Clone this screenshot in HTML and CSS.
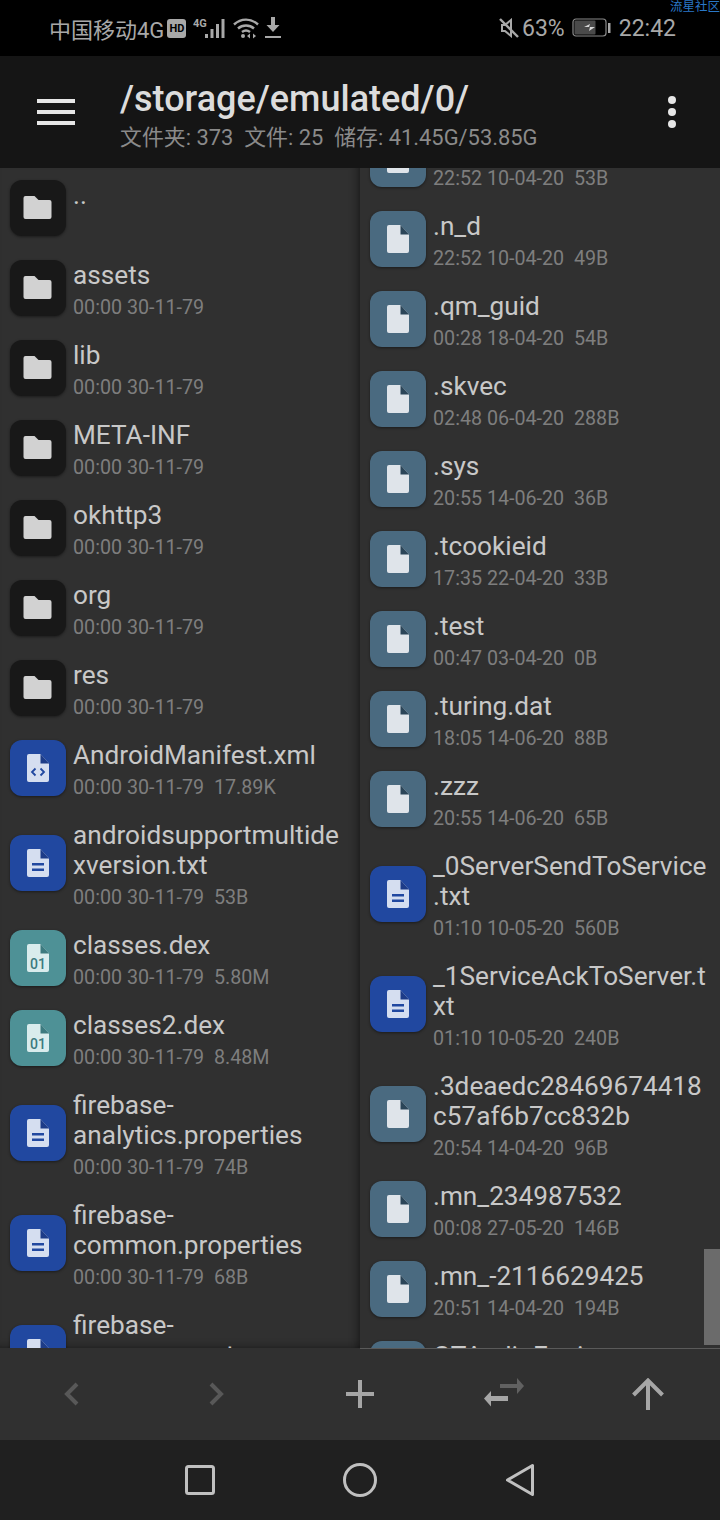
FILE: index.html
```html
<!DOCTYPE html>
<html lang="en">
<head>
    <meta charset="UTF-8">
    <meta name="viewport" content="width=device-width, initial-scale=1.0">
    <title>File Explorer</title>
    <link rel="stylesheet" href="styles.css">
</head>
<body>
    <svg class="sprite" width="0" height="0">
        <symbol id="folder" viewBox="0 0 56 56">
            <path d="M15.500 16h9l4 4h11a2 2 0 0 1 2 2v15a2 2 0 0 1-2 2h-24a2 2 0 0 1-2-2v-19a2 2 0 0 1 2-2z" fill="#d2d2d2"/>
        </symbol>
        <symbol id="doc" viewBox="0 0 56 56">
            <path d="M19 14h11.500l8.500 9.500v16.500a2 2 0 0 1-2 2h-18a2 2 0 0 1-2-2v-24a2 2 0 0 1 2-2z" fill="#dfe4ea"/>
            <path d="M30.500 14l8.500 9.500h-8.500z" fill="#2b4558"/>
        </symbol>
        <symbol id="txt" viewBox="0 0 56 56">
            <path d="M19 14h11.500l8.500 9.500v16.500a2 2 0 0 1-2 2h-18a2 2 0 0 1-2-2v-24a2 2 0 0 1 2-2z" fill="#d5def0"/>
            <path d="M30.500 14l8.500 9.500h-8.500z" fill="#1d3c88"/>
            <path d="M22 28h12v2.500h-12zM22 33.500h12v2.500h-12z" fill="#2148a0"/>
        </symbol>
        <symbol id="xml" viewBox="0 0 56 56">
            <path d="M19 14h11.500l8.500 9.500v16.500a2 2 0 0 1-2 2h-18a2 2 0 0 1-2-2v-24a2 2 0 0 1 2-2z" fill="#d5def0"/>
            <path d="M30.500 14l8.500 9.500h-8.500z" fill="#1d3c88"/>
            <path d="M25.500 28.500l-3.500 3.500 3.500 3.500M30.500 28.500l3.500 3.500-3.500 3.500" fill="none" stroke="#2148a0" stroke-width="1.800"/>
        </symbol>
        <symbol id="dex" viewBox="0 0 56 56">
            <path d="M19 14h11.500l8.500 9.500v16.500a2 2 0 0 1-2 2h-18a2 2 0 0 1-2-2v-24a2 2 0 0 1 2-2z" fill="#d9eced"/>
            <path d="M30.500 14l8.500 9.500h-8.500z" fill="#3c7a7f"/>
        </symbol>
    </svg>

    <div class="status-bar">
        <span class="watermark">流星社区</span>
        <div class="status-left">
            <span>中国移动4G</span>
            <span class="hd">HD</span>
            <svg class="signal" width="34" height="24" viewBox="0 0 34 24">
                <path d="M12 18h3v4h-3zM17.500 13h3v9h-3zM23 8h3v14h-3zM28.500 3h3v19h-3z" fill="#a8a8a8"/>
                <text x="0" y="11" class="signal-text">4G</text>
            </svg>
            <svg class="wifi" width="26" height="22" viewBox="0 0 26 22">
                <path d="M1 7.500c7-6.500 17-6.500 24 0M5 11.500c4.500-4 11.500-4 16 0M9 15c2.500-2 5.500-2 8 0" fill="none" stroke="#a8a8a8" stroke-width="2.400"/>
                <circle cx="10" cy="19" r="2" fill="#a8a8a8"/>
                <path d="M17 16.500l-3 2.500 3 2.500zM20 16.500l3 2.500-3 2.500z" fill="#a8a8a8"/>
            </svg>
            <svg class="download" width="16" height="22" viewBox="0 0 16 22">
                <path d="M6 0h4v8h4.500l-6.500 7-6.500-7h4.500zM0 19h16v2h-16z" fill="#a8a8a8"/>
            </svg>
        </div>
        <div class="status-right">
            <svg width="20" height="20" viewBox="0 0 20 20">
                <path d="M3 7h3l6-5v16l-6-5h-3z" fill="none" stroke="#a8a8a8" stroke-width="2"/>
                <path d="M1 1l18 18" stroke="#a8a8a8" stroke-width="2.400"/>
            </svg>
            <span class="percent">63%</span>
            <svg class="battery" width="39" height="20" viewBox="0 0 39 20">
                <rect x="1" y="1" width="33" height="17" rx="3" fill="none" stroke="#8a8a8a" stroke-width="1.200"/>
                <rect x="2.500" y="2.500" width="21" height="14" rx="1" fill="#4a4a4a"/>
                <path d="M12 9l6-3-1 3h6l-6 4 1-4z" fill="#d8d8d8"/>
                <rect x="36" y="5" width="2.500" height="10" fill="#a8a8a8"/>
            </svg>
            <span>22:42</span>
        </div>
    </div>

    <div class="app-bar">
        <div class="menu-btn">
            <svg width="38" height="26" viewBox="0 0 38 26">
                <path d="M0 0h38v4h-38zM0 11h38v4h-38zM0 22h38v4h-38z" fill="#e6e6e6"/>
            </svg>
        </div>
        <div class="path-info">
            <div class="path">/storage/emulated/0/</div>
            <div class="path-stats">文件夹: 373&nbsp; 文件: 25&nbsp; 储存: 41.45G/53.85G</div>
        </div>
        <div class="more-btn">
            <svg width="10" height="34" viewBox="0 0 10 34">
                <circle cx="5" cy="5" r="4" fill="#e6e6e6"/>
                <circle cx="5" cy="17" r="4" fill="#e6e6e6"/>
                <circle cx="5" cy="29" r="4" fill="#e6e6e6"/>
            </svg>
        </div>
    </div>

    <div class="panes">
        <div class="pane left-pane">
            <div class="file-row">
                <div class="file-icon dir"><svg><use href="#folder"/></svg></div>
                <div class="file-text"><div class="name">..</div></div>
            </div>
            <div class="file-row">
                <div class="file-icon dir"><svg><use href="#folder"/></svg></div>
                <div class="file-text"><div class="name">assets</div><div class="meta">00:00 30-11-79</div></div>
            </div>
            <div class="file-row">
                <div class="file-icon dir"><svg><use href="#folder"/></svg></div>
                <div class="file-text"><div class="name">lib</div><div class="meta">00:00 30-11-79</div></div>
            </div>
            <div class="file-row">
                <div class="file-icon dir"><svg><use href="#folder"/></svg></div>
                <div class="file-text"><div class="name">META-INF</div><div class="meta">00:00 30-11-79</div></div>
            </div>
            <div class="file-row">
                <div class="file-icon dir"><svg><use href="#folder"/></svg></div>
                <div class="file-text"><div class="name">okhttp3</div><div class="meta">00:00 30-11-79</div></div>
            </div>
            <div class="file-row">
                <div class="file-icon dir"><svg><use href="#folder"/></svg></div>
                <div class="file-text"><div class="name">org</div><div class="meta">00:00 30-11-79</div></div>
            </div>
            <div class="file-row">
                <div class="file-icon dir"><svg><use href="#folder"/></svg></div>
                <div class="file-text"><div class="name">res</div><div class="meta">00:00 30-11-79</div></div>
            </div>
            <div class="file-row">
                <div class="file-icon blue"><svg><use href="#xml"/></svg></div>
                <div class="file-text"><div class="name">AndroidManifest.xml</div><div class="meta">00:00 30-11-79&nbsp; 17.89K</div></div>
            </div>
            <div class="file-row">
                <div class="file-icon blue"><svg><use href="#txt"/></svg></div>
                <div class="file-text"><div class="name">androidsupportmultide<br>xversion.txt</div><div class="meta">00:00 30-11-79&nbsp; 53B</div></div>
            </div>
            <div class="file-row">
                <div class="file-icon teal"><svg><use href="#dex"/></svg><span class="dex-label">01</span></div>
                <div class="file-text"><div class="name">classes.dex</div><div class="meta">00:00 30-11-79&nbsp; 5.80M</div></div>
            </div>
            <div class="file-row">
                <div class="file-icon teal"><svg><use href="#dex"/></svg><span class="dex-label">01</span></div>
                <div class="file-text"><div class="name">classes2.dex</div><div class="meta">00:00 30-11-79&nbsp; 8.48M</div></div>
            </div>
            <div class="file-row">
                <div class="file-icon blue"><svg><use href="#txt"/></svg></div>
                <div class="file-text"><div class="name">firebase-<br>analytics.properties</div><div class="meta">00:00 30-11-79&nbsp; 74B</div></div>
            </div>
            <div class="file-row">
                <div class="file-icon blue"><svg><use href="#txt"/></svg></div>
                <div class="file-text"><div class="name">firebase-<br>common.properties</div><div class="meta">00:00 30-11-79&nbsp; 68B</div></div>
            </div>
            <div class="file-row">
                <div class="file-icon blue"><svg><use href="#txt"/></svg></div>
                <div class="file-text"><div class="name">firebase-<br>measurement</div><div class="meta">00:00 30-11-79&nbsp; 60B</div></div>
            </div>
        </div>

        <div class="pane right-pane">
            <div class="right-list">
                <div class="file-row">
                    <div class="file-icon slate"><svg><use href="#doc"/></svg></div>
                    <div class="file-text"><div class="name">.n_c</div><div class="meta">22:52 10-04-20&nbsp; 53B</div></div>
                </div>
                <div class="file-row">
                    <div class="file-icon slate"><svg><use href="#doc"/></svg></div>
                    <div class="file-text"><div class="name">.n_d</div><div class="meta">22:52 10-04-20&nbsp; 49B</div></div>
                </div>
                <div class="file-row">
                    <div class="file-icon slate"><svg><use href="#doc"/></svg></div>
                    <div class="file-text"><div class="name">.qm_guid</div><div class="meta">00:28 18-04-20&nbsp; 54B</div></div>
                </div>
                <div class="file-row">
                    <div class="file-icon slate"><svg><use href="#doc"/></svg></div>
                    <div class="file-text"><div class="name">.skvec</div><div class="meta">02:48 06-04-20&nbsp; 288B</div></div>
                </div>
                <div class="file-row">
                    <div class="file-icon slate"><svg><use href="#doc"/></svg></div>
                    <div class="file-text"><div class="name">.sys</div><div class="meta">20:55 14-06-20&nbsp; 36B</div></div>
                </div>
                <div class="file-row">
                    <div class="file-icon slate"><svg><use href="#doc"/></svg></div>
                    <div class="file-text"><div class="name">.tcookieid</div><div class="meta">17:35 22-04-20&nbsp; 33B</div></div>
                </div>
                <div class="file-row">
                    <div class="file-icon slate"><svg><use href="#doc"/></svg></div>
                    <div class="file-text"><div class="name">.test</div><div class="meta">00:47 03-04-20&nbsp; 0B</div></div>
                </div>
                <div class="file-row">
                    <div class="file-icon slate"><svg><use href="#doc"/></svg></div>
                    <div class="file-text"><div class="name">.turing.dat</div><div class="meta">18:05 14-06-20&nbsp; 88B</div></div>
                </div>
                <div class="file-row">
                    <div class="file-icon slate"><svg><use href="#doc"/></svg></div>
                    <div class="file-text"><div class="name">.zzz</div><div class="meta">20:55 14-06-20&nbsp; 65B</div></div>
                </div>
                <div class="file-row">
                    <div class="file-icon blue"><svg><use href="#txt"/></svg></div>
                    <div class="file-text"><div class="name">_0ServerSendToService<br>.txt</div><div class="meta">01:10 10-05-20&nbsp; 560B</div></div>
                </div>
                <div class="file-row">
                    <div class="file-icon blue"><svg><use href="#txt"/></svg></div>
                    <div class="file-text"><div class="name">_1ServiceAckToServer.t<br>xt</div><div class="meta">01:10 10-05-20&nbsp; 240B</div></div>
                </div>
                <div class="file-row">
                    <div class="file-icon slate"><svg><use href="#doc"/></svg></div>
                    <div class="file-text"><div class="name">.3deaedc28469674418<br>c57af6b7cc832b</div><div class="meta">20:54 14-04-20&nbsp; 96B</div></div>
                </div>
                <div class="file-row">
                    <div class="file-icon slate"><svg><use href="#doc"/></svg></div>
                    <div class="file-text"><div class="name">.mn_234987532</div><div class="meta">00:08 27-05-20&nbsp; 146B</div></div>
                </div>
                <div class="file-row">
                    <div class="file-icon slate"><svg><use href="#doc"/></svg></div>
                    <div class="file-text"><div class="name">.mn_-2116629425</div><div class="meta">20:51 14-04-20&nbsp; 194B</div></div>
                </div>
                <div class="file-row">
                    <div class="file-icon slate"><svg><use href="#doc"/></svg></div>
                    <div class="file-text"><div class="name">GTAudioEngine</div><div class="meta">20:51 14-04-20&nbsp; 20B</div></div>
                </div>
            </div>
            <div class="scroll-thumb"></div>
        </div>
    </div>

    <div class="tool-bar">
        <div class="tool">
            <svg width="16" height="24" viewBox="0 0 16 24"><path d="M13 2l-10 10 10 10" fill="none" stroke="#585858" stroke-width="4"/></svg>
        </div>
        <div class="tool">
            <svg width="16" height="24" viewBox="0 0 16 24"><path d="M3 2l10 10-10 10" fill="none" stroke="#585858" stroke-width="4"/></svg>
        </div>
        <div class="tool">
            <svg width="28" height="28" viewBox="0 0 28 28"><path d="M12 0h4v12h12v4h-12v12h-4v-12h-12v-4h12z" fill="#a6a6a6"/></svg>
        </div>
        <div class="tool">
            <svg width="40" height="32" viewBox="0 0 40 32">
                <path d="M16 6h17v-6l7 8-7 8v-6h-17z" fill="#616161"/>
                <path d="M24 18h-17v-5l-7 7.500 7 8v-5.500h17z" fill="#a6a6a6"/>
            </svg>
        </div>
        <div class="tool">
            <svg width="32" height="32" viewBox="0 0 32 32"><path d="M16 32v-29M1.500 17l14.500-14.500 14.500 14.500" fill="none" stroke="#a6a6a6" stroke-width="4"/></svg>
        </div>
    </div>

    <div class="nav-bar">
        <div class="nav-btn">
            <svg width="30" height="30" viewBox="0 0 30 30"><rect x="1.500" y="1.500" width="27" height="27" rx="2" fill="none" stroke="#c0c0c0" stroke-width="3"/></svg>
        </div>
        <div class="nav-btn">
            <svg width="34" height="34" viewBox="0 0 34 34"><circle cx="17" cy="17" r="15.500" fill="none" stroke="#c0c0c0" stroke-width="3"/></svg>
        </div>
        <div class="nav-btn">
            <svg width="30" height="34" viewBox="0 0 30 34"><path d="M27.500 2.500v29l-25-14.500z" fill="none" stroke="#c0c0c0" stroke-width="3" stroke-linejoin="round"/></svg>
        </div>
    </div>
</body>
</html>
```

FILE: styles.css
```css
html, body {
    height: 100%;
}

body {
    margin: 0;
    display: flex;
    flex-direction: column;
    overflow: hidden;
    background: #303030;
    font-family: Roboto, "Noto Sans CJK SC", sans-serif;
}

.sprite {
    position: absolute;
}

.status-bar {
    position: relative;
    flex: 0 0 56px;
    display: flex;
    align-items: center;
    justify-content: space-between;
    padding: 0 44px 0 49px;
    background: #000;
    color: #a8a8a8;
    font-size: 23px;
}

.watermark {
    position: absolute;
    top: 0;
    right: 0;
    font-size: 12.5px;
    line-height: 13px;
    color: #2a78c8;
}

.status-left,
.status-right {
    display: flex;
    align-items: center;
}

.status-left {
    font-size: 22px;
}

.hd {
    width: 19px;
    height: 19px;
    margin-left: 3px;
    border-radius: 3px;
    background: #a8a8a8;
    color: #000;
    font-size: 11px;
    font-weight: 700;
    line-height: 19px;
    text-align: center;
}

.signal {
    margin-left: 7px;
}

.signal-text {
    font-size: 11px;
    font-weight: 700;
    fill: #a8a8a8;
}

.wifi {
    margin-left: 6px;
}

.download {
    margin-left: 6px;
}

.percent {
    margin-left: 3px;
}

.battery {
    margin: 0 8px 0 7px;
}

.app-bar {
    flex: 0 0 112px;
    display: flex;
    align-items: center;
    background: #151515;
}

.menu-btn {
    flex: 0 0 112px;
    display: flex;
    justify-content: center;
}

.more-btn {
    flex: 0 0 96px;
    display: flex;
    justify-content: center;
}

.path-info {
    flex: 1;
    margin-left: 8px;
    padding-top: 8px;
}

.path {
    color: #dcdcdc;
    font-size: 36px;
    font-weight: 500;
    line-height: 44px;
}

.path-stats {
    color: #8a8a8a;
    font-size: 21.9px;
    line-height: 34px;
}

.panes {
    flex: 1;
    display: flex;
    min-height: 0;
}

.pane {
    position: relative;
    overflow: hidden;
    background: #303030;
}

.left-pane {
    flex: 0 0 360px;
    box-shadow: inset -10px 0 8px -8px rgba(0, 0, 0, 0.45), inset 0 -8px 8px -8px rgba(0, 0, 0, 0.45);
}

.right-pane {
    flex: 1;
}

.right-list {
    margin-top: -49px;
}

.file-row {
    display: flex;
    align-items: center;
    padding: 12px 10px 5px;
    min-height: 63px;
}

.file-icon {
    position: relative;
    flex: 0 0 56px;
    height: 56px;
    margin: -7px 7px 0 0;
    border-radius: 12px;
    box-shadow: 0 1px 3px rgba(0, 0, 0, 0.45);
}

.file-icon svg {
    display: block;
    width: 56px;
    height: 56px;
}

.dir {
    background: #181818;
}

.blue {
    background: #2148a0;
}

.teal {
    background: #4e9196;
}

.slate {
    background: #4a6a80;
}

.dex-label {
    position: absolute;
    left: 0;
    right: 0;
    top: 27px;
    color: #3c7a7f;
    font-size: 14px;
    font-weight: 500;
    line-height: 14px;
    text-align: center;
}

.file-text {
    flex: 1;
    min-width: 0;
    align-self: flex-start;
}

.name {
    color: #c8c8c8;
    font-size: 26.2px;
    line-height: 30px;
    white-space: nowrap;
}

.meta {
    margin-top: 3px;
    color: #7e7e7e;
    font-size: 19.7px;
    line-height: 30px;
    white-space: nowrap;
}

.scroll-thumb {
    position: absolute;
    top: 1081px;
    right: 0;
    width: 16px;
    height: 96px;
    background: #6b6b6b;
}

.tool-bar {
    flex: 0 0 92px;
    display: flex;
    background: linear-gradient(to right, transparent 360px, #5a5a5a 360px) top / 100% 1px no-repeat, #303030;
}

.tool {
    flex: 0 0 144px;
    display: flex;
    align-items: center;
    justify-content: center;
}

.nav-bar {
    flex: 0 0 80px;
    display: flex;
    justify-content: center;
    background: #202020;
}

.nav-btn {
    flex: 0 0 160px;
    display: flex;
    align-items: center;
    justify-content: center;
}
```
